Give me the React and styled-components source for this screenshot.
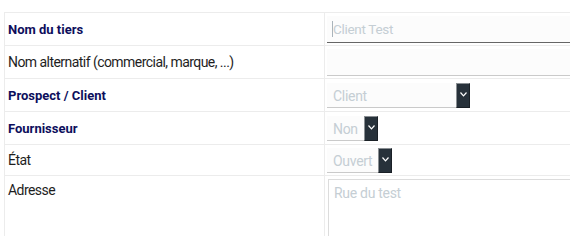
import React from 'react';
import styled, { createGlobalStyle } from 'styled-components';

const GlobalStyle = createGlobalStyle`
	html, body {
		margin: 0;
		padding: 0;
		background: #fff;
		overflow: hidden;
	}
	body {
		font-family: Roboto, "Liberation Sans", sans-serif;
		font-size: 13px;
		color: #262626;
	}
`

const Wrap = styled.div`
	padding: 12px 0 0 4px;
	width: 700px;
`

const Table = styled.table`
	width: 100%;
	border-collapse: collapse;
	border-top: 1px solid #ececec;
	border-left: 1px solid #ececec;
`

const Row = styled.tr`
	border-bottom: 1px solid #ececec;
	height: ${p => p.$h}px;
`

const Label = styled.td`
	width: 320px;
	padding: 0 0 0 3px;
	border-right: 1px solid #ececec;
	vertical-align: ${p => (p.$top ? 'top' : 'middle')};
	padding-top: ${p => (p.$top ? '6px' : '0')};
	font-size: ${p => (p.$required ? '13px' : '14px')};
	letter-spacing: ${p => (p.$required ? '0' : '-0.55px')};
	font-weight: ${p => (p.$required ? 700 : 400)};
	color: ${p => (p.$required ? '#0d0e5c' : '#1e1e1e')};
	box-sizing: border-box;
`

const Field = styled.td`
	padding: 0 0 0 2px;
	vertical-align: ${p => (p.$top ? 'top' : 'middle')};
	padding-top: ${p => (p.$top ? '3px' : '0')};
`

const Input = styled.div`
	display: flex;
	align-items: center;
	box-sizing: border-box;
	height: 27px;
	padding-left: 5px;
	background: #fcfcfc;
	border-bottom: 1px solid ${p => (p.$focus ? '#666' : '#cacaca')};
	color: #c5ced4;
	font-size: 13.5px;
	letter-spacing: -0.3px;
`

const Caret = styled.span`
	display: inline-block;
	width: 1px;
	height: 16px;
	background: #aab4bb;
`

const Select = styled.div`
	display: flex;
	width: ${p => p.$w}px;
	height: 25px;
	box-sizing: border-box;
	background: #fcfcfc;
	border-bottom: 1px solid #cacaca;
`

const SelectText = styled.div`
	flex: 1;
	display: flex;
	align-items: center;
	padding: 2px 0 0 6px;
	color: #c5ced4;
	font-size: 14px;
	letter-spacing: -0.3px;
`

const Arrow = styled.div`
	width: 14px;
	height: 25px;
	box-sizing: border-box;
	margin-bottom: -1px;
	background: #27313a;
	border-top: 1px solid #8a8f93;
	border-left: 1px solid #8a8f93;
	border-right: 1px solid #1a2026;
	border-bottom: 1px solid #1a2026;
	display: flex;
	justify-content: center;
	padding-top: 8px;
`

const TextArea = styled.div`
	box-sizing: border-box;
	height: 80px;
	margin-left: 1px;
	border: 1px solid #dcdcdc;
	padding: 5px 5px;
	color: #c5ced4;
	font-size: 14px;
	letter-spacing: -0.3px;
`

const Chevron = () => (
	<svg width="7" height="5" viewBox="0 0 7 5">
		<path d="M0.5 0.5 L3.5 3.8 L6.5 0.5" fill="none" stroke="#fff" strokeWidth="1.2" />
	</svg>
)

const Dropdown = ({ w, value }) => (
	<Select $w={w}>
		<SelectText>{value}</SelectText>
		<Arrow><Chevron /></Arrow>
	</Select>
)

const App = () => {
	return (
		<>
			<GlobalStyle />
			<Wrap>
				<Table>
					<tbody>
						<Row $h={33}>
							<Label $required>Nom du tiers</Label>
							<Field>
								<Input $focus><Caret />Client Test</Input>
							</Field>
						</Row>
						<Row $h={33}>
							<Label>Nom alternatif (commercial, marque, ...)</Label>
							<Field>
								<Input />
							</Field>
						</Row>
						<Row $h={33}>
							<Label $required>Prospect / Client</Label>
							<Field>
								<Dropdown w={143} value="Client" />
							</Field>
						</Row>
						<Row $h={33}>
							<Label $required>Fournisseur</Label>
							<Field>
								<Dropdown w={51} value="Non" />
							</Field>
						</Row>
						<Row $h={31}>
							<Label>État</Label>
							<Field>
								<Dropdown w={65} value="Ouvert" />
							</Field>
						</Row>
						<Row $h={90}>
							<Label $top>Adresse</Label>
							<Field $top>
								<TextArea>Rue du test</TextArea>
							</Field>
						</Row>
					</tbody>
				</Table>
			</Wrap>
		</>
	)
}

export default App
